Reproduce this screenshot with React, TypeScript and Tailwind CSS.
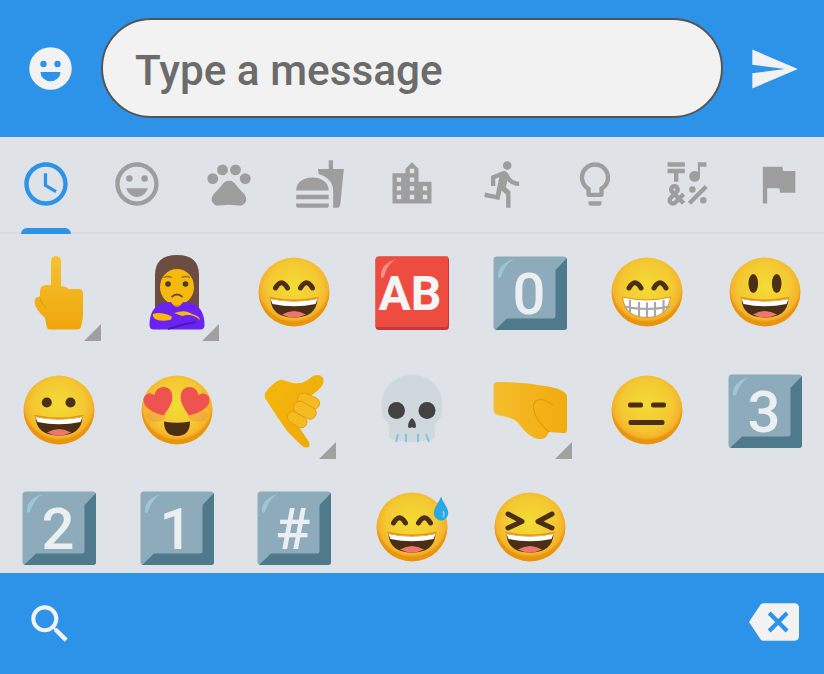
import React from "react";
import {
  MdAccessTime,
  MdBackspace,
  MdDirectionsRun,
  MdEmojiSymbols,
  MdFastfood,
  MdFlag,
  MdLightbulbOutline,
  MdLocationCity,
  MdPets,
  MdSearch,
  MdSend,
  MdSentimentVerySatisfied,
} from "react-icons/md";

const INK = "#4a2f14";

const Svg = ({ children }: { children: React.ReactNode }) => (
  <svg viewBox="0 0 74 74" className="w-[74px] h-[74px] overflow-visible">
    {children}
  </svg>
);

const Face = ({ children }: { children: React.ReactNode }) => (
  <Svg>
    <defs>
      <radialGradient id="faceFill" cx="50%" cy="42%" r="52%">
        <stop offset="0%" stopColor="#f3dc35" />
        <stop offset="70%" stopColor="#f4c832" />
        <stop offset="92%" stopColor="#f5b32c" />
        <stop offset="100%" stopColor="#e8940c" />
      </radialGradient>
    </defs>
    <ellipse cx="37" cy="36" rx="35.5" ry="34.5" fill="url(#faceFill)" />
    {children}
  </Svg>
);

// open laughing mouth shared by most of the smileys
const Mouth = () => (
  <g>
    <path d="M12.5 41.5Q37 47 61.5 41.5" fill="none" stroke="#e8940c" strokeWidth="1.5" />
    <path d="M13.5 43Q37 48 60.5 43Q59.5 61.5 37 61.5Q14.5 61.5 13.5 43Z" fill={INK} />
    <path d="M13.5 43Q37 48 60.5 43L58.5 48Q37 52.5 15.5 48Z" fill="#fff" />
    <path d="M25 58.5Q37 51.5 49 58.5Q43 61.5 37 61.5Q31 61.5 25 58.5Z" fill="#ed7770" />
  </g>
);

const Arc = ({ x }: { x: number }) => (
  <path
    d={`M${x - 6} 32Q${x} 21.5 ${x + 6} 32`}
    fill="none"
    stroke={INK}
    strokeWidth="5"
    strokeLinecap="round"
  />
);

const Smile = () => (
  <Face>
    <Arc x={24.5} />
    <Arc x={49.5} />
    <Mouth />
  </Face>
);

const Grinning = () => (
  <Face>
    <circle cx="24.8" cy="28.5" r="5" fill={INK} />
    <circle cx="48.5" cy="28.5" r="5" fill={INK} />
    <Mouth />
  </Face>
);

const Grin = () => (
  <Face>
    <ellipse cx="25.3" cy="27.5" rx="4.8" ry="9.5" fill={INK} />
    <ellipse cx="48.7" cy="27.5" rx="4.8" ry="9.5" fill={INK} />
    <Mouth />
  </Face>
);

const Beaming = () => (
  <Face>
    <Arc x={25} />
    <Arc x={50} />
    <path d="M12.5 41Q37 47 60.5 41Q58 61.5 37 61.5Q15 61.5 12.5 41Z" fill="#fff" stroke="#e8940c" strokeWidth="1" />
    <path d="M20 44V57M29 46V61M37 46.5V61.5M45 46V61M53.5 44V57M14 50.5Q37 55.5 59.5 50.5" stroke="#a8a8a8" strokeWidth="2.2" fill="none" />
  </Face>
);

const HeartEyes = () => (
  <Face>
    <ellipse cx="16" cy="42" rx="10" ry="6" fill="#ef8a4a" opacity=".35" />
    <ellipse cx="58" cy="42" rx="10" ry="6" fill="#ef8a4a" opacity=".35" />
    <path d="M23.5 41.5C14 39 3 34 3.5 25.5C4 20 10 17.5 14.5 21C15.5 15 21 12 26.5 13.5C32 15.5 33 21 32 27C30.5 32 27 37 23.5 41.5Z" fill="#ef5350" />
    <path d="M49 41.5C59 39 70 34 69.5 25.5C69 20 63 17.5 58.5 21C57.5 15 52 12 46.5 13.5C41 15.5 40 21 41 27C42.5 32 45.5 37 49 41.5Z" fill="#ef5350" />
    <path d="M24 47.5Q37 50 50 47.5Q50 62 37 62Q24 62 24 47.5Z" fill={INK} />
  </Face>
);

const Expressionless = () => (
  <Face>
    <rect x="18" y="28.5" width="15" height="5" rx="2" fill={INK} />
    <rect x="41" y="28.5" width="15" height="5" rx="2" fill={INK} />
    <rect x="18.5" y="46" width="36" height="5" rx="2" fill={INK} />
  </Face>
);

const SweatSmile = () => (
  <Face>
    <Arc x={24.5} />
    <Arc x={49.5} />
    <Mouth />
    <path d="M66 5.5C68 12 73.2 16 73.2 22A7.2 7.5 0 0 1 58.8 22C58.8 16 64 12 66 5.5Z" fill="#29a9e6" />
    <path d="M68 20Q70 23 68 26" fill="none" stroke="#8bd3f5" strokeWidth="1.5" />
  </Face>
);

const Squint = () => (
  <Face>
    <path d="M15 23L29 30.5L15 37" fill="none" stroke={INK} strokeWidth="5" strokeLinecap="round" strokeLinejoin="round" />
    <path d="M59 23L45 30.5L59 37" fill="none" stroke={INK} strokeWidth="5" strokeLinecap="round" strokeLinejoin="round" />
    <Mouth />
  </Face>
);

const Key = ({ label }: { label: string }) => (
  <Svg>
    <rect x="0.5" y="0.5" width="73.5" height="73.5" rx="3.5" fill="#8dabba" />
    <path d="M74 2L62.5 14V60Q62.5 62.5 60 62.5H14L2 74H71Q74 74 74 71Z" fill="#4e7a8c" />
    <path d="M5 21Q4 8 21 3Q12 8 8 21Q6 23 5 21Z" fill="#9fc6d3" />
    <text x="36" y="57.5" textAnchor="middle" fontSize="58" fontWeight="500" fill="#eceff1">
      {label}
    </text>
  </Svg>
);

const AB = () => (
  <Svg>
    <rect x="0.5" y="0.5" width="73.5" height="73.5" rx="3.5" fill="#c7353f" />
    <path d="M0.5 4Q0.5 0.5 4 0.5H73V68Q73 71 70 71H0.5Z" fill="#ef4c41" />
    <path d="M6 21Q5 8 21 3Q12 8 9 21Q7 23 6 21Z" fill="#f28f86" />
    <text x="35" y="54" textAnchor="middle" fontSize="48" fontWeight="700" fill="#f5f5f5">
      AB
    </text>
  </Svg>
);

const Finger = () => (
  <Svg>
    <defs>
      <linearGradient id="handFill" x1="0" y1="0" x2="0" y2="1">
        <stop offset="0%" stopColor="#f6c232" />
        <stop offset="100%" stopColor="#f0a60a" />
      </linearGradient>
    </defs>
    <path
      d="M29 5A5 5 0 0 1 39 5V30L44 31Q47 34 50 33L57 33Q61 33 61 38V61L59 71Q58 73.5 55 73.5H28Q25 73.5 24.5 70L23 62Q13 53 12.5 46Q12.5 41 16.5 41Q17.5 41 18 39V36Q18 29 24 29H29Z"
      fill="url(#handFill)"
    />
    <path d="M18 42Q19 48 24 51" fill="none" stroke="#e0960a" strokeWidth="1" />
  </Svg>
);

const Woman = () => (
  <Svg>
    <path d="M15 62V19Q15 -1 37 -1Q59 -1 59 19V62Z" fill="#6d4c41" />
    <rect x="31" y="44" width="12" height="10" fill="#e59600" />
    <ellipse cx="37" cy="31" rx="17" ry="18" fill="#f6b90d" />
    <circle cx="28" cy="28" r="2.8" fill="#4a3a32" />
    <circle cx="45.5" cy="28" r="2.8" fill="#4a3a32" />
    <path d="M23.5 21.5Q28 19.5 32 21.5M41.5 21.5Q45.5 19.5 50 21.5" fill="none" stroke="#a0701a" strokeWidth="1.3" />
    <path d="M31.5 41Q37 36 42.5 41" fill="none" stroke="#6d4c41" strokeWidth="1.8" />
    <path d="M9.5 69Q9.5 52 22 47L31 46Q37 56 43 46L52 47Q64.5 52 64.5 69Q64.5 73.5 60 73.5H14Q9.5 73.5 9.5 69Z" fill="#6a23f2" />
    <path d="M13 58Q20 55 31 60Q33 62 30 64Q20 66 15 63Q12 60 13 58Z" fill="#f6b90d" />
    <path d="M60 64Q52 57 42 60L34 57Q46 53 52 58Q60 60 60 64Z" fill="#f6b90d" />
    <path d="M28 73Q42 68 56 66" fill="none" stroke="#3f1ab0" strokeWidth="1.5" />
  </Svg>
);

const CallMe = () => (
  <Svg>
    <defs>
      <linearGradient id="handFillB" x1="0" y1="0" x2="1" y2="1">
        <stop offset="0%" stopColor="#f5b80c" />
        <stop offset="100%" stopColor="#efa808" />
      </linearGradient>
    </defs>
    <path
      d="M8 19Q16 8 24 5.5Q30 7 36 9Q46 11 56 2Q63 -1 66 4Q68 8 64 13Q58 20 50 24L40 50L52 68Q54 74 49 73.5Q46 73.5 43 70L30 57Q18 40 8 24Q7 21 8 19Z"
      fill="url(#handFillB)"
    />
    <rect x="40" y="21" width="23" height="12" rx="6" transform="rotate(22 51 27)" fill="#f6bb20" stroke="#e6980a" strokeWidth=".8" />
    <rect x="36" y="30" width="24" height="12.5" rx="6" transform="rotate(28 48 36)" fill="#f6bb20" stroke="#e6980a" strokeWidth=".8" />
    <rect x="30" y="40" width="21" height="11" rx="5.5" transform="rotate(30 40 45)" fill="#f6bb20" stroke="#e6980a" strokeWidth=".8" />
  </Svg>
);

const Skull = () => (
  <Svg>
    <path
      d="M37 1C54 1 67.5 13 67.5 31C67.5 41 65 47 60 50V62Q59 67 52 66Q44 68 37 68Q30 68 22 66Q15 67 14 62V50Q7 47 6.5 31C6.5 13 20 1 37 1Z"
      fill="#cfd8dc"
    />
    <circle cx="21.5" cy="36.5" r="8.5" fill="#424242" />
    <circle cx="52" cy="36.5" r="8.5" fill="#424242" />
    <path d="M37 44Q33 47 33 53Q35 55 37 53Q39 55 41 53Q41 47 37 44Z" fill="#424242" />
    <path d="M23 60L21 68M31 60V68M43 60V68M51 60L54 68" stroke="#81c4e0" strokeWidth="2" />
  </Svg>
);

const Fist = () => (
  <Svg>
    <defs>
      <linearGradient id="fistFill" x1="0" y1="0" x2="1" y2="0">
        <stop offset="0%" stopColor="#f4bd2e" />
        <stop offset="100%" stopColor="#f2ab0c" />
      </linearGradient>
    </defs>
    <path
      d="M0.5 12Q0.5 8 5 8Q32 8 52 12Q72 15 74 22V56Q73 60 70 59L56 58Q53 66 46 65Q36 64 26 50Q22 44 5 41Q0.5 40 0.5 35Z"
      fill="url(#fistFill)"
    />
    <path d="M60 31Q52 24 44 26Q38 30 42 40Q46 50 56 58" fill="none" stroke="#e6990a" strokeWidth="1.2" />
  </Svg>
);

// one entry per grid cell, read left to right
const emojis: { el: React.ReactNode; badge?: boolean }[] = [
  { el: <Finger />, badge: true },
  { el: <Woman />, badge: true },
  { el: <Smile /> },
  { el: <AB /> },
  { el: <Key label="0" /> },
  { el: <Beaming /> },
  { el: <Grin /> },
  { el: <Grinning /> },
  { el: <HeartEyes /> },
  { el: <CallMe />, badge: true },
  { el: <Skull /> },
  { el: <Fist />, badge: true },
  { el: <Expressionless /> },
  { el: <Key label="3" /> },
  { el: <Key label="2" /> },
  { el: <Key label="1" /> },
  { el: <Key label="#" /> },
  { el: <SweatSmile /> },
  { el: <Squint /> },
];

const tabs = [
  MdSentimentVerySatisfied,
  MdPets,
  MdFastfood,
  MdLocationCity,
  MdDirectionsRun,
  MdLightbulbOutline,
  MdEmojiSymbols,
  MdFlag,
];

export default function App() {
  return (
    <div className="w-[824px] h-[674px] flex flex-col overflow-hidden font-[Roboto,sans-serif] bg-[#dfe3e7]">
      {/* Message bar */}
      <div className="h-[137px] shrink-0 flex items-center pl-[25px] bg-[#2d93e8]">
        <svg viewBox="0 0 24 24" className="w-[51px] h-[51px] shrink-0">
          <circle cx="12" cy="12" r="10" fill="#f2f2f2" />
          <circle cx="8.7" cy="9.9" r="1.5" fill="#2d93e8" />
          <circle cx="15.3" cy="9.9" r="1.5" fill="#2d93e8" />
          <path d="M7.3 13.6H16.7A4.7 4.4 0 0 1 7.3 13.6Z" fill="#2d93e8" />
        </svg>
        <div className="ml-[25px] mb-[1px] w-[622px] h-[100px] flex items-center pl-[32px] pt-[5px] rounded-full border-2 border-[#555] bg-[#f2f2f2]">
          <span className="text-[42.3px] font-medium text-[#6b6b6b]">Type a message</span>
        </div>
        <MdSend className="ml-[25px] w-[52px] h-[52px] text-[#f2f2f2]" />
      </div>

      {/* Category tabs */}
      <div className="h-[97px] shrink-0 flex border-b-2 border-[#dcdae1]">
        <div className="relative flex-1 flex justify-center pt-[21px]">
          <MdAccessTime className="w-[52px] h-[52px] text-[#2d93e8]" />
          <div className="absolute bottom-[-2px] left-[21px] w-[50px] h-[6px] rounded-t-md bg-[#2d93e8]"></div>
        </div>
        {tabs.map((Icon, i) => (
          <div key={i} className="flex-1 flex justify-center pt-[21px]">
            <Icon className="w-[52px] h-[52px] text-[#9e9e9e]" />
          </div>
        ))}
      </div>

      {/* Emoji grid */}
      <div className="flex-1 min-h-0 overflow-hidden grid grid-cols-7 auto-rows-[117.7px] content-start">
        {emojis.map((e, i) => (
          <div key={i} className="relative flex items-center justify-center">
            {e.el}
            {e.badge && (
              <svg viewBox="0 0 17 17" className="absolute right-[16.7px] bottom-[10.7px] w-[17px] h-[17px]">
                <path d="M17 0V17H0Z" fill="#a0a0a0" />
              </svg>
            )}
          </div>
        ))}
      </div>

      {/* Search and backspace */}
      <div className="h-[101px] shrink-0 flex items-center justify-between px-[25px] bg-[#2d93e8]">
        <MdSearch className="w-[50px] h-[50px] text-[#f2f2f2]" />
        <MdBackspace className="mb-[4px] w-[50px] h-[50px] text-[#f2f2f2]" />
      </div>
    </div>
  );
}
